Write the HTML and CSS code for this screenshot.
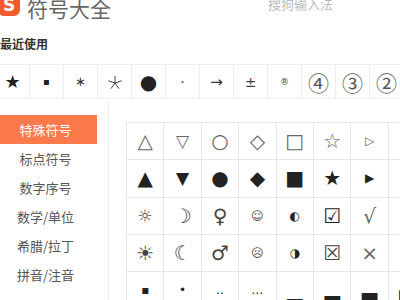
FILE: index.html
```html
<!DOCTYPE html>
<html lang="zh-CN">
<head>
<meta charset="utf-8">
<title>符号大全</title>
<link rel="stylesheet" href="styles.css">
</head>
<body>
<div class="page">
  <header class="header">
    <div class="logo">S</div>
    <div class="title">符号大全</div>
    <div class="brand">搜狗输入法</div>
  </header>
  <div class="section-label">最近使用</div>
  <div class="recent">
    <span class="rc s-star">★</span>
    <span class="rc s-sq">▪</span>
    <span class="rc s-ast">∗</span>
    <span class="rc"><svg class="ico" width="16" height="16" viewBox="0 0 16 16"><path d="M8 9V2M8 9L14.7 6.8M8 9L12.1 14.7M8 9L3.9 14.7M8 9L1.3 6.8" stroke="#444" stroke-width="1" fill="none"/></svg></span>
    <span class="rc s-dot">●</span>
    <span class="rc s-mid">·</span>
    <span class="rc s-arr">→</span>
    <span class="rc s-pm">±</span>
    <span class="rc s-reg">®</span>
    <span class="rc s-num">④</span>
    <span class="rc s-num">③</span>
    <span class="rc s-num">②</span>
  </div>
  <div class="main">
    <nav class="sidebar">
      <div class="item active">特殊符号</div>
      <div class="item">标点符号</div>
      <div class="item">数字序号</div>
      <div class="item">数学/单位</div>
      <div class="item">希腊/拉丁</div>
      <div class="item">拼音/注音</div>
    </nav>
    <section class="content">
      <div class="grid">
        <span class="c o">△</span><span class="c o sm">▽</span><span class="c o">○</span><span class="c o">◇</span><span class="c o">□</span><span class="c o">☆</span><span class="c o xs">▷</span><span class="c o xs">◁</span>
        <span class="c f">▲</span><span class="c f sm">▼</span><span class="c f">●</span><span class="c f">◆</span><span class="c f">■</span><span class="c f">★</span><span class="c f xs">▶</span><span class="c f xs">◀</span>
        <span class="c m sm">☼</span><span class="c m">☽</span><span class="c m">♀</span><span class="c m xs">☺</span><span class="c f xs">◐</span><span class="c f">☑</span><span class="c o">√</span><span class="c f">✔</span>
        <span class="c m">☀</span><span class="c m">☾</span><span class="c m">♂</span><span class="c m xs">☹</span><span class="c f xs">◑</span><span class="c m">☒</span><span class="c o">×</span><span class="c o">✘</span>
        <span class="c f xs">▪</span><span class="c f xs">•</span><span class="c f xs">‥</span><span class="c f xs">…</span><span class="c f">▁</span><span class="c f">▂</span><span class="c f">▃</span><span class="c f">▄</span>
      </div>
    </section>
  </div>
</div>
</body>
</html>
```
FILE: styles.css
```css
* { box-sizing: border-box; }
html, body { margin: 0; padding: 0; }
body {
  width: 400px;
  height: 300px;
  overflow: hidden;
  background: #fff;
  font-family: "Noto Sans CJK SC", "Noto Sans", sans-serif;
  color: #333;
}
.page { width: 400px; }

.header {
  display: flex;
  align-items: flex-start;
  height: 24px;
  margin-top: -4px;
}
.logo {
  width: 22px;
  height: 22px;
  margin-left: -2px;
  margin-top: -2px;
  border-radius: 6px;
  background: #f25a2b;
  color: #fff;
  font-family: "DejaVu Sans", sans-serif;
  font-weight: bold;
  font-size: 17px;
  line-height: 22px;
  text-align: center;
}
.title {
  margin-left: 7px;
  font-size: 21px;
  line-height: 24px;
  color: #666;
}
.brand {
  margin-left: auto;
  margin-right: 67px;
  font-size: 13px;
  line-height: 16px;
  color: #bbb;
}

.section-label {
  margin-top: 16px;
  font-size: 12px;
  line-height: 16px;
  font-weight: bold;
  color: #333;
}

.recent {
  display: flex;
  margin-top: 12px;
  margin-left: -4px;
  height: 35px;
  border-top: 1px solid #eee;
  border-bottom: 1px solid #eee;
}
.rc {
  flex: 0 0 34px;
  height: 33px;
  border-right: 1px solid #eee;
  display: flex;
  align-items: center;
  justify-content: center;
  font-family: "DejaVu Sans", sans-serif;
  color: #333;
}
.ico { display: block; }
.s-star { font-size: 18px; color: #222; }
.s-sq { font-size: 10px; color: #222; }
.s-ast { font-size: 13px; }
.s-dot { font-size: 20px; color: #222; }
.s-mid { font-size: 14px; }
.s-arr { font-size: 15px; }
.s-pm { font-size: 14px; color: #444; }
.s-reg { font-size: 9px; color: #444; }
.s-num { font-family: "Noto Sans CJK SC", sans-serif; font-size: 21px; color: #555; }

.main { display: flex; }
.sidebar {
  width: 109px;
  height: 210px;
  padding-top: 16px;
  border-right: 1px solid #eee;
  flex: 0 0 109px;
}
.item {
  width: 97px;
  height: 29px;
  line-height: 29px;
  padding-right: 6px;
  text-align: center;
  font-size: 13px;
  color: #555;
}
.item.active {
  background: #fa7a4c;
  color: #fff;
}

.content {
  padding-top: 23px;
  padding-left: 17px;
}
.grid {
  display: grid;
  grid-template-columns: repeat(8, 37.4px);
  grid-auto-rows: 37.3px;
  border-left: 1px solid #e6e6e6;
  border-top: 1px solid #e6e6e6;
}
.c {
  border-right: 1px solid #e6e6e6;
  border-bottom: 1px solid #e6e6e6;
  display: flex;
  align-items: center;
  justify-content: center;
  font-family: "DejaVu Sans", sans-serif;
  font-size: 20px;
}
.c.o { color: #666; }
.c.f { color: #222; }
.c.m { color: #444; }
.c.sm { font-size: 17px; }
.c.xs { font-size: 12px; }
```
